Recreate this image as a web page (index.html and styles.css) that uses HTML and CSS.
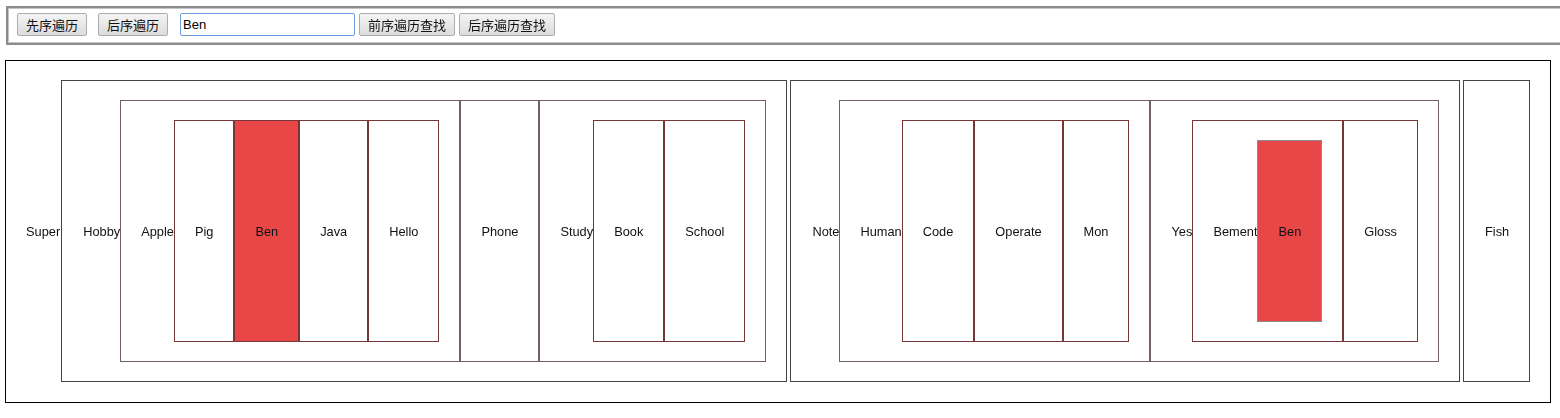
FILE: index.html
```html
<!DOCTYPE html>
<html lang="zh">
<head>
    <meta charset="UTF-8">
    <meta name="viewport" content="width=device-width, initial-scale=1.0">
    <title>遍历</title>
    <link rel="stylesheet" href="styles.css">
</head>
<body>
    <div class="toolbar">
        <button class="btn btn-gap">先序遍历</button>
        <button class="btn btn-gap-lg">后序遍历</button>
        <input type="text" class="search-input" value="Ben" autofocus>
        <button class="btn btn-gap-sm">前序遍历查找</button>
        <button class="btn">后序遍历查找</button>
    </div>

    <div class="node lv1 root">
        <span class="label">Super</span>
        <div class="node lv2">
            <span class="label">Hobby</span>
            <div class="node lv3">
                <span class="label">Apple</span>
                <div class="node lv4"><span class="label">Pig</span></div>
                <div class="node lv4 hit"><span class="label">Ben</span></div>
                <div class="node lv4"><span class="label">Java</span></div>
                <div class="node lv4"><span class="label">Hello</span></div>
            </div>
            <div class="node lv3"><span class="label">Phone</span></div>
            <div class="node lv3">
                <span class="label">Study</span>
                <div class="node lv4"><span class="label">Book</span></div>
                <div class="node lv4"><span class="label">School</span></div>
            </div>
        </div>
        <div class="node lv2">
            <span class="label">Note</span>
            <div class="node lv3">
                <span class="label">Human</span>
                <div class="node lv4"><span class="label">Code</span></div>
                <div class="node lv4"><span class="label">Operate</span></div>
                <div class="node lv4"><span class="label">Mon</span></div>
            </div>
            <div class="node lv3">
                <span class="label">Yes</span>
                <div class="node lv4">
                    <span class="label">Bement</span>
                    <div class="node lv5 hit"><span class="label">Ben</span></div>
                </div>
                <div class="node lv4"><span class="label">Gloss</span></div>
            </div>
        </div>
        <div class="node lv2"><span class="label">Fish</span></div>
    </div>
</body>
</html>
```

FILE: styles.css
```css
body {
    margin: 0;
    font-family: "Liberation Sans", Arial, sans-serif;
    font-size: 13px;
    color: #111;
    background: #fff;
}
.toolbar {
    display: flex;
    align-items: center;
    margin: 6px 0 0 6px;
    padding: 5px 0 7px 9px;
    border: 2px solid #8c8c8c;
    border-right: none;
    box-shadow: inset 1px 1px 0 #c4c4c4, inset 0 -1px 0 #c4c4c4;
}
.btn {
    height: 23px;
    padding: 0 8px;
    border: 1px solid #acacac;
    border-radius: 2px;
    background: linear-gradient(#f4f4f4, #dcdcdc);
    font-family: "Noto Sans CJK SC", sans-serif;
    font-size: 13px;
    line-height: 20px;
    color: #111;
    cursor: pointer;
}
.btn-gap {
    margin-right: 11px;
}
.btn-gap-lg {
    margin-right: 12px;
}
.btn-gap-sm {
    margin-right: 4px;
}
.search-input {
    box-sizing: border-box;
    width: 175px;
    height: 23px;
    margin-right: 4px;
    padding: 0 2px;
    border: 1px solid #6f9be0;
    border-radius: 2px;
    font-family: "Liberation Sans", Arial, sans-serif;
    font-size: 13px;
    color: #000;
    outline: none;
}
.node {
    display: flex;
    padding: 19px 20px;
    border: 1px solid;
    font-size: 12.8px;
}
.label {
    align-self: center;
    white-space: nowrap;
}
.root {
    display: inline-flex;
    height: 302px;
    margin: 15px 0 0 5px;
    padding-bottom: 20px;
}
.root > .label {
    margin-right: 1px;
}
.lv1 {
    border-color: #000;
}
.lv2 {
    border-color: #444;
}
.lv2 > .label {
    margin-left: 1px;
}
.lv2 + .lv2 {
    margin-left: 3px;
}
.lv3 {
    border-color: #736060;
}
.lv4 {
    border-color: #773737;
}
.lv5 {
    border-color: #8c8c8c;
}
.hit {
    background-color: #e94747;
}
```
